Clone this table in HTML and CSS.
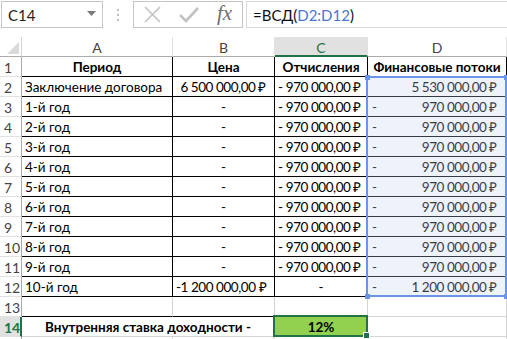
FILE: index.html
```html
<!DOCTYPE html>
<html lang="ru">
<head>
<meta charset="utf-8">
<title>ВСД</title>
<link rel="stylesheet" href="styles.css">
</head>
<body>
<div class="app">
  <div class="fbar">
    <div class="namebox">
      <span class="nb-text">C14</span>
      <svg class="nb-arrow" width="9" height="5" viewBox="0 0 9 5"><polygon points="0,0 9,0 4.5,5" fill="#7a7a7a"/></svg>
    </div>
    <div class="dots">
      <svg width="3" height="12" viewBox="0 0 3 12"><rect x="0" y="0" width="2" height="2" fill="#bdbdbd"/><rect x="0" y="5" width="2" height="2" fill="#bdbdbd"/><rect x="0" y="10" width="2" height="2" fill="#bdbdbd"/></svg>
    </div>
    <div class="fnbox">
      <svg class="ic-x" width="17" height="17" viewBox="0 0 17 17"><path d="M1 1 L16 16 M16 1 L1 16" stroke="#c3c3c3" stroke-width="1.6" fill="none"/></svg>
      <svg class="ic-ok" width="20" height="16" viewBox="0 0 20 16"><path d="M1 8 L7 14 L19 1" stroke="#c3c3c3" stroke-width="2.6" fill="none"/></svg>
      <span class="fx">fx</span>
    </div>
    <div class="formula">=ВСД(<span class="ref">D2:D12</span>)</div>
  </div>

  <div class="sheet-wrap">
    <div class="sheet">
      <div class="c corner"><svg width="12" height="12" viewBox="0 0 12 12"><polygon points="12,0 12,12 0,12" fill="#dadada"/></svg></div>
      <div class="c ch">A</div>
      <div class="c ch">B</div>
      <div class="c ch ch-sel">C</div>
      <div class="c ch">D</div>

      <div class="c rh rh-t">1</div>
      <div class="c t b ctr">Период</div>
      <div class="c t b ctr">Цена</div>
      <div class="c t b ctr">Отчисления</div>
      <div class="c t b ctr">Финансовые потоки</div>

      <div class="c rh rh-t">2</div>
      <div class="c t lft">Заключение договора</div>
      <div class="c t rgt pb">6 500 000,00 ₽</div>
      <div class="c t acc pc"><span>-</span><span>970 000,00 ₽</span></div>
      <div class="c t rgt pd">5 530 000,00 ₽</div>

      <div class="c rh rh-t">3</div>
      <div class="c t lft">1-й год</div>
      <div class="c t ctr">-</div>
      <div class="c t acc pc"><span>-</span><span>970 000,00 ₽</span></div>
      <div class="c t acc pd"><span>-</span><span>970 000,00 ₽</span></div>

      <div class="c rh rh-t">4</div>
      <div class="c t lft">2-й год</div>
      <div class="c t ctr">-</div>
      <div class="c t acc pc"><span>-</span><span>970 000,00 ₽</span></div>
      <div class="c t acc pd"><span>-</span><span>970 000,00 ₽</span></div>

      <div class="c rh rh-t">5</div>
      <div class="c t lft">3-й год</div>
      <div class="c t ctr">-</div>
      <div class="c t acc pc"><span>-</span><span>970 000,00 ₽</span></div>
      <div class="c t acc pd"><span>-</span><span>970 000,00 ₽</span></div>

      <div class="c rh rh-t">6</div>
      <div class="c t lft">4-й год</div>
      <div class="c t ctr">-</div>
      <div class="c t acc pc"><span>-</span><span>970 000,00 ₽</span></div>
      <div class="c t acc pd"><span>-</span><span>970 000,00 ₽</span></div>

      <div class="c rh rh-t">7</div>
      <div class="c t lft">5-й год</div>
      <div class="c t ctr">-</div>
      <div class="c t acc pc"><span>-</span><span>970 000,00 ₽</span></div>
      <div class="c t acc pd"><span>-</span><span>970 000,00 ₽</span></div>

      <div class="c rh rh-t">8</div>
      <div class="c t lft">6-й год</div>
      <div class="c t ctr">-</div>
      <div class="c t acc pc"><span>-</span><span>970 000,00 ₽</span></div>
      <div class="c t acc pd"><span>-</span><span>970 000,00 ₽</span></div>

      <div class="c rh rh-t">9</div>
      <div class="c t lft">7-й год</div>
      <div class="c t ctr">-</div>
      <div class="c t acc pc"><span>-</span><span>970 000,00 ₽</span></div>
      <div class="c t acc pd"><span>-</span><span>970 000,00 ₽</span></div>

      <div class="c rh rh-t">10</div>
      <div class="c t lft">8-й год</div>
      <div class="c t ctr">-</div>
      <div class="c t acc pc"><span>-</span><span>970 000,00 ₽</span></div>
      <div class="c t acc pd"><span>-</span><span>970 000,00 ₽</span></div>

      <div class="c rh rh-t">11</div>
      <div class="c t lft">9-й год</div>
      <div class="c t ctr">-</div>
      <div class="c t acc pc"><span>-</span><span>970 000,00 ₽</span></div>
      <div class="c t acc pd"><span>-</span><span>970 000,00 ₽</span></div>

      <div class="c rh rh-t">12</div>
      <div class="c t lft">10-й год</div>
      <div class="c t acc pb"><span>-</span><span>1 200 000,00 ₽</span></div>
      <div class="c t ctr">-</div>
      <div class="c t acc pd"><span>-</span><span>1 200 000,00 ₽</span></div>

      <div class="c rh">13</div>
      <div class="c bb"></div>
      <div class="c bb"></div>
      <div class="c"></div>
      <div class="c"></div>

      <div class="c rh rh-sel">14</div>
      <div class="c span2 b ctr">Внутренняя ставка доходности -</div>
      <div class="c green b ctr">12%</div>
      <div class="c"></div>

      <div class="c rh"></div>
      <div class="c"></div>
      <div class="c"></div>
      <div class="c"></div>
      <div class="c"></div>
    </div>

    <div class="range">
      <i class="h tl"></i><i class="h tr"></i><i class="h bl"></i><i class="h br"></i>
    </div>
    <div class="active"><i class="fill"></i></div>
  </div>
</div>
</body>
</html>
```

FILE: styles.css
```css
html, body {
  margin: 0;
  padding: 0;
  background: #fff;
}
.app {
  width: 507px;
  height: 339px;
  overflow: hidden;
  font-family: Lato, "Liberation Sans", Arial, sans-serif;
  color: #000;
}

/* formula bar */
.fbar {
  display: flex;
  align-items: flex-start;
  height: 37px;
  padding-top: 1px;
  box-sizing: border-box;
}
.namebox {
  margin-left: 1px;
  width: 102px;
  height: 27px;
  box-sizing: border-box;
  border: 1px solid #c6c6c6;
  display: flex;
  align-items: center;
  justify-content: space-between;
  padding: 0 6px 0 6px;
}
.nb-text {
  font-size: 15px;
  color: #222;
}
.nb-arrow {
  margin-top: -2px;
}
.dots {
  width: 30px;
  height: 27px;
  display: flex;
  align-items: center;
  justify-content: center;
}
.fnbox {
  width: 110px;
  height: 27px;
  box-sizing: border-box;
  border: 1px solid #c6c6c6;
  display: flex;
  align-items: center;
  padding-left: 10px;
}
.ic-x { margin-right: 18px; }
.ic-ok { margin-right: 18px; margin-top: 1px; }
.fx {
  font-family: "Liberation Serif", "Times New Roman", serif;
  font-style: italic;
  font-size: 21px;
  color: #6f6f6f;
  margin-top: -3px;
}
.formula {
  margin-left: 3px;
  flex: 1;
  height: 27px;
  box-sizing: border-box;
  border: 1px solid #dadada;
  border-right: none;
  display: flex;
  align-items: center;
  padding-left: 6px;
  font-size: 15px;
  color: #111;
}
.ref { color: #4a76cf; }

/* sheet */
.sheet-wrap {
  position: relative;
}
.sheet {
  display: grid;
  grid-template-columns: 22px 151px 102px 93px 139px;
  grid-auto-rows: 20px;
  font-size: 13.5px;
}
.c {
  box-sizing: border-box;
  border-right: 1px solid #d4d4d4;
  border-bottom: 1px solid #d4d4d4;
  display: flex;
  align-items: center;
  white-space: nowrap;
  overflow: hidden;
  padding: 1px 3px 0 3px;
}
.corner {
  justify-content: flex-end;
  align-items: flex-end;
  padding: 0 2px 2px 0;
  border-right-color: #d4d4d4;
  border-bottom-color: #ababab;
}
.ch {
  justify-content: center;
  color: #444;
  font-size: 14px;
  border-bottom-color: #ababab;
  border-right-color: #e1e1e1;
}
.ch-sel {
  background: #e1e1e1;
  color: #217346;
  border-bottom: 2px solid #217346;
  padding-top: 2px;
}
.rh {
  color: #444;
  font-size: 14px;
  padding-left: 4px;
  border-right-color: #ababab;
  border-bottom-color: #e1e1e1;
}
.rh-sel {
  background: #e1e1e1;
  color: #217346;
  font-weight: bold;
  border-right: 2px solid #217346;
}
.t {
  border-right-color: #000;
  border-bottom-color: #000;
}
.bb { border-bottom-color: #000; }
.b { font-weight: bold; }
.ctr { justify-content: center; }
.lft { justify-content: flex-start; }
.rgt { justify-content: flex-end; }
.acc { justify-content: space-between; }
.pb { padding-right: 8px; padding-left: 3px; letter-spacing: -0.45px; }
.pc { padding-right: 6px; padding-left: 3px; letter-spacing: -0.45px; }
.pd { padding-right: 9px; padding-left: 4px; letter-spacing: -0.45px; }
.span2 { grid-column: span 2; }
.green { background: #92d050; }

/* D2:D12 reference highlight */
.range {
  position: absolute;
  left: 366px;
  top: 39px;
  width: 141px;
  height: 221px;
  box-sizing: border-box;
  border: 2px solid #6a95e6;
  background: rgba(190, 208, 240, 0.28);
}
.h {
  position: absolute;
  width: 5px;
  height: 5px;
  background: #6a95e6;
}
.tl { left: -3.5px; top: -3.5px; }
.tr { right: -3.5px; top: -3.5px; }
.bl { left: -3.5px; bottom: -3.5px; }
.br { right: -3.5px; bottom: -3.5px; }

/* active cell C14 */
.active {
  position: absolute;
  left: 273px;
  top: 278px;
  width: 95px;
  height: 22px;
  box-sizing: border-box;
  border: 2px solid #217346;
}
.fill {
  position: absolute;
  right: -4px;
  bottom: -4px;
  width: 5px;
  height: 5px;
  background: #217346;
  border: 1px solid #fff;
}
```
